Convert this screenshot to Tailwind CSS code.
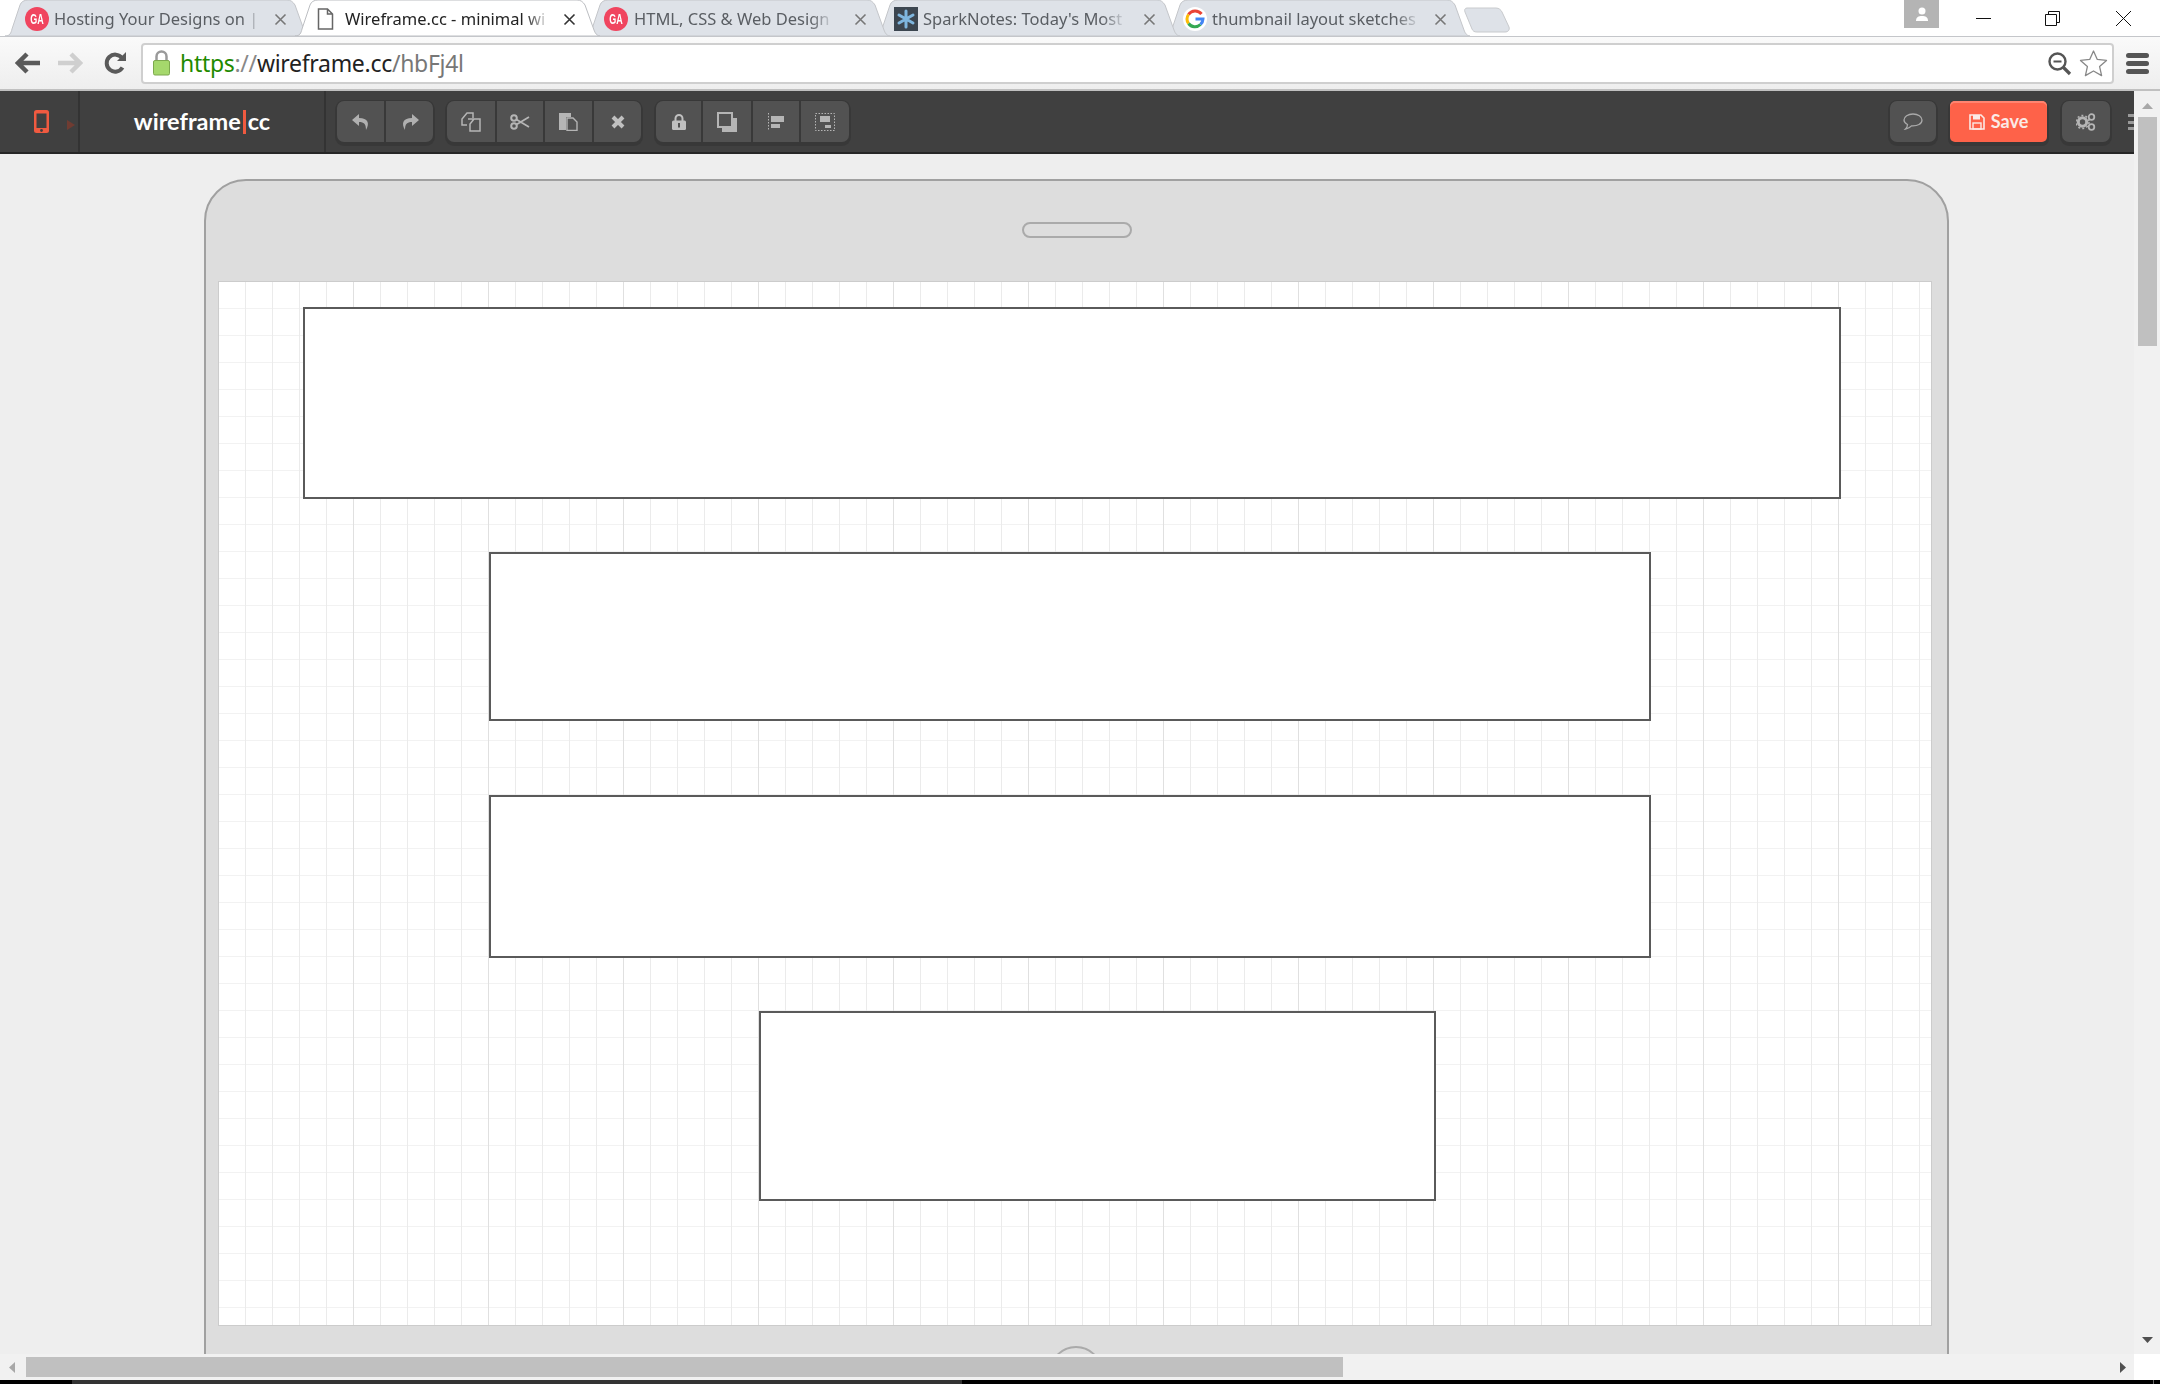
<!DOCTYPE html>
<html>
<head>
<meta charset="utf-8">
<script src="https://cdn.jsdelivr.net/npm/@tailwindcss/browser@4"></script>
<title>Wireframe.cc</title>
</head>
<body class="bg-white">
<div class="w-[2160px] h-[1384px] overflow-hidden flex flex-col bg-[#eee] font-['Open_Sans',sans-serif]">

  <!-- tab strip -->
  <div class="h-[36px] shrink-0 bg-white relative flex pl-[5px]">
    <!-- tab 1 -->
    <div class="relative w-[305px] h-[36px] shrink-0 z-[1]">
      <svg class="absolute inset-0" width="305" height="36" viewBox="0 0 305 36"><path d="M0 36C5 36 6 33 7 29L15 5C16 2 19 0 23 0H282C286 0 288 2 290 5L299 30C300 33 302 36 305 36Z" fill="#dee2e8" stroke="#c4c6ca"/></svg>
      <div class="absolute left-[20px] top-[7px] w-[24px] h-[24px] rounded-full bg-[#f0455f] border-2 border-dotted border-[#f0455f] flex items-center justify-center text-white text-[12px] font-bold font-['Liberation_Sans',sans-serif]"><span class="scale-x-[.75] scale-y-[1.2]">GA</span></div>
      <div class="absolute left-[49px] top-[6px] h-[26px] whitespace-nowrap text-[16.5px] leading-[26px] text-[#5a5e63] font-['Noto_Sans',sans-serif] [mask-image:linear-gradient(to_right,black_92%,#0003)]">Hosting Your Designs on |</div>
      <svg class="absolute left-[269px] top-[13px]" width="13" height="13" viewBox="0 0 13 13"><path d="M1.5 1.5L11.5 11.5M11.5 1.5L1.5 11.5" stroke="#777" stroke-width="1.6"/></svg>
    </div>
    <!-- tab 2 active -->
    <div class="relative w-[305px] h-[36px] shrink-0 -ml-[15px] z-[9]">
      <svg class="absolute inset-0" width="305" height="36" viewBox="0 0 305 36"><path d="M0 36C5 36 6 33 7 29L15 5C16 2 19 0 23 0H282C286 0 288 2 290 5L299 30C300 33 302 36 305 36Z" fill="#ffffff" stroke="#bcbec2"/></svg>
      <svg class="absolute left-[22px] top-[8px]" width="17" height="22" viewBox="0 0 17 22"><path d="M1.5 1H10.5L15.5 6V21H1.5Z M10.5 1V6H15.5" fill="#fff" stroke="#666" stroke-width="1.5"/></svg>
      <div class="absolute left-[50px] top-[6px] h-[26px] whitespace-nowrap text-[16.5px] leading-[26px] text-[#222] font-['Noto_Sans',sans-serif] [mask-image:linear-gradient(to_right,black_90%,#0003)]">Wireframe.cc - minimal wi</div>
      <svg class="absolute left-[268px] top-[13px]" width="13" height="13" viewBox="0 0 13 13"><path d="M1.5 1.5L11.5 11.5M11.5 1.5L1.5 11.5" stroke="#333" stroke-width="1.6"/></svg>
    </div>
    <!-- tab 3 -->
    <div class="relative w-[305px] h-[36px] shrink-0 -ml-[15px] z-[3]">
      <svg class="absolute inset-0" width="305" height="36" viewBox="0 0 305 36"><path d="M0 36C5 36 6 33 7 29L15 5C16 2 19 0 23 0H282C286 0 288 2 290 5L299 30C300 33 302 36 305 36Z" fill="#dee2e8" stroke="#c4c6ca"/></svg>
      <div class="absolute left-[19px] top-[7px] w-[24px] h-[24px] rounded-full bg-[#f0455f] border-2 border-dotted border-[#f0455f] flex items-center justify-center text-white text-[12px] font-bold font-['Liberation_Sans',sans-serif]"><span class="scale-x-[.75] scale-y-[1.2]">GA</span></div>
      <div class="absolute left-[49px] top-[6px] h-[26px] whitespace-nowrap text-[16.5px] leading-[26px] text-[#5a5e63] font-['Noto_Sans',sans-serif] [mask-image:linear-gradient(to_right,black_90%,#0003)]">HTML, CSS &amp; Web Design</div>
      <svg class="absolute left-[269px] top-[13px]" width="13" height="13" viewBox="0 0 13 13"><path d="M1.5 1.5L11.5 11.5M11.5 1.5L1.5 11.5" stroke="#777" stroke-width="1.6"/></svg>
    </div>
    <!-- tab 4 -->
    <div class="relative w-[305px] h-[36px] shrink-0 -ml-[15px] z-[2]">
      <svg class="absolute inset-0" width="305" height="36" viewBox="0 0 305 36"><path d="M0 36C5 36 6 33 7 29L15 5C16 2 19 0 23 0H282C286 0 288 2 290 5L299 30C300 33 302 36 305 36Z" fill="#dee2e8" stroke="#c4c6ca"/></svg>
      <svg class="absolute left-[19px] top-[7px]" width="24" height="24" viewBox="0 0 24 24"><rect width="24" height="24" fill="#3c4650"/><path d="M12 4V20M5 8L19 16M19 8L5 16" stroke="#7fb6de" stroke-width="3" stroke-linecap="round"/></svg>
      <div class="absolute left-[48px] top-[6px] h-[26px] whitespace-nowrap text-[16.5px] leading-[26px] text-[#5a5e63] font-['Noto_Sans',sans-serif] [mask-image:linear-gradient(to_right,black_90%,#0003)]">SparkNotes: Today's Most</div>
      <svg class="absolute left-[268px] top-[13px]" width="13" height="13" viewBox="0 0 13 13"><path d="M1.5 1.5L11.5 11.5M11.5 1.5L1.5 11.5" stroke="#777" stroke-width="1.6"/></svg>
    </div>
    <!-- tab 5 -->
    <div class="relative w-[305px] h-[36px] shrink-0 -ml-[15px] z-[1]">
      <svg class="absolute inset-0" width="305" height="36" viewBox="0 0 305 36"><path d="M0 36C5 36 6 33 7 29L15 5C16 2 19 0 23 0H282C286 0 288 2 290 5L299 30C300 33 302 36 305 36Z" fill="#dee2e8" stroke="#c4c6ca"/></svg>
      <svg class="absolute left-[18px] top-[7px]" width="24" height="24" viewBox="0 0 24 24"><circle cx="12" cy="12" r="12" fill="#fff"/><path d="M18.5 7A8 8 0 0 0 5.5 7.5" fill="none" stroke="#ea4335" stroke-width="3"/><path d="M5.5 7.5A8 8 0 0 0 5.5 16.5" fill="none" stroke="#fbbc05" stroke-width="3"/><path d="M5.5 16.5A8 8 0 0 0 17.5 17.5" fill="none" stroke="#34a853" stroke-width="3"/><path d="M17.5 17.5A8 8 0 0 0 20 12H12.5" fill="none" stroke="#4285f4" stroke-width="3"/></svg>
      <div class="absolute left-[47px] top-[6px] h-[26px] whitespace-nowrap text-[16.5px] leading-[26px] text-[#5a5e63] font-['Noto_Sans',sans-serif] [mask-image:linear-gradient(to_right,black_90%,#0003)]">thumbnail layout sketches</div>
      <svg class="absolute left-[269px] top-[13px]" width="13" height="13" viewBox="0 0 13 13"><path d="M1.5 1.5L11.5 11.5M11.5 1.5L1.5 11.5" stroke="#777" stroke-width="1.6"/></svg>
    </div>
    <!-- new tab -->
    <svg class="shrink-0 -ml-[7px] mt-[7px]" width="48" height="26" viewBox="0 0 48 26"><path d="M4 1H33C36 1 38 3 39 5L46 20C47 23 45 25 42 25H14C11 25 10 24 9 22L2 5C1 3 2 1 4 1Z" fill="#dee2e8" stroke="#c8cacd"/></svg>

    <!-- window controls -->
    <div class="absolute right-0 top-0 flex items-start h-[28px]">
      <div class="w-[35px] h-[28px] bg-[#b4b4b4] flex items-center justify-center mr-[37px]">
        <svg width="14" height="15" viewBox="0 0 14 15"><circle cx="7" cy="4" r="3.5" fill="#fff"/><path d="M1 14C1 10 3.5 9 7 9S13 10 13 14Z" fill="#fff"/></svg>
      </div>
      <svg class="mt-[11px] mr-[54px]" width="15" height="15" viewBox="0 0 15 15"><path d="M0 7.5H15" stroke="#111"/></svg>
      <svg class="mt-[11px] mr-[56px]" width="15" height="15" viewBox="0 0 15 15"><path d="M3.5 3V.5H14.5V11.5H11.5M.5 3.5H11.5V14.5H.5Z" fill="none" stroke="#111"/></svg>
      <svg class="mt-[11px] mr-[29px]" width="15" height="15" viewBox="0 0 15 15"><path d="M0 0L15 15M15 0L0 15" stroke="#111"/></svg>
    </div>
  </div>

  <!-- address bar -->
  <div class="h-[55px] shrink-0 bg-[linear-gradient(#fafafa,#eeeeee)] border-t border-[#c4c6ca] border-b-2 border-b-[#c0c0c0] flex items-center relative z-[5]">
    <svg class="ml-[15px]" width="26" height="22" viewBox="0 0 26 22"><path d="M12 2L3 11L12 20M3 11H25" fill="none" stroke="#5a5a5a" stroke-width="4.5"/></svg>
    <svg class="ml-[16px]" width="26" height="22" viewBox="0 0 26 22"><path d="M14 2L23 11L14 20M23 11H1" fill="none" stroke="#cfcfcf" stroke-width="4.5"/></svg>
    <svg class="ml-[21px]" width="23" height="23" viewBox="0 0 23 23"><path d="M18.5 15.5A8.5 8.5 0 1 1 18 6" fill="none" stroke="#5a5a5a" stroke-width="4"/><path d="M13 9H22V0Z" fill="#5a5a5a"/></svg>
    <div class="ml-[14px] w-[1973px] h-[41px] bg-white border-2 border-[#cfcfcf] rounded-[4px] flex items-center relative">
      <svg class="ml-[9px]" width="19" height="26" viewBox="0 0 19 26"><path d="M4.5 11V6.5A5 5 0 0 1 14.5 6.5V11" fill="none" stroke="#9a9a9a" stroke-width="2.5"/><rect x="1.5" y="10.5" width="16" height="14.5" rx="1.5" fill="#a5d86c" stroke="#7da84e"/></svg>
      <div class="ml-[9px] text-[23px] leading-[30px] whitespace-nowrap font-['Noto_Sans',sans-serif] tracking-[-0.3px]"><span class="text-[#1f8a00]">https</span><span class="text-[#888]">://</span><span class="text-[#222]">wireframe.cc</span><span class="text-[#777]">/hbFj4l</span></div>
      <svg class="absolute left-[1905px] top-[7px]" width="24" height="24" viewBox="0 0 24 24"><circle cx="9.5" cy="9.5" r="8" fill="none" stroke="#555" stroke-width="2.4"/><path d="M5.5 9.5H13.5" stroke="#555" stroke-width="2"/><path d="M15 15L22 22" stroke="#555" stroke-width="3.2"/></svg>
      <svg class="absolute left-[1936px] top-[4px]" width="29" height="29" viewBox="0 0 29 29"><path d="M14.5 2L18.3 10.4L27.5 11.4L20.6 17.6L22.6 26.6L14.5 22L6.4 26.6L8.4 17.6L1.5 11.4L10.7 10.4Z" fill="#fff" stroke="#888" stroke-width="1.3" stroke-linejoin="round"/></svg>
    </div>
    <svg class="ml-[12px]" width="23" height="21" viewBox="0 0 23 21"><rect y="0" width="23" height="5" rx="2.5" fill="#555"/><rect y="8" width="23" height="5" rx="2.5" fill="#555"/><rect y="16" width="23" height="5" rx="2.5" fill="#555"/></svg>
  </div>

  <!-- app area + vertical scrollbar -->
  <div class="flex-1 min-h-0 flex">
    <div class="w-[2134px] flex flex-col min-h-0">
      <!-- app toolbar -->
      <div class="h-[63px] shrink-0 bg-[#404040] border-b-2 border-b-[#262626] flex items-start relative overflow-hidden">
        <div class="w-[80px] h-[61px] border-r-2 border-[#333] relative">
          <svg class="absolute left-[34px] top-[19px]" width="15" height="23" viewBox="0 0 15 23"><rect width="15" height="23" rx="2.5" fill="#f05a40"/><rect x="2.5" y="3.5" width="10" height="14.5" fill="#404040"/><circle cx="7.5" cy="20.5" r="1.4" fill="#404040"/></svg>
          <svg class="absolute left-[67px] top-[29px]" width="8" height="10" viewBox="0 0 8 10"><path d="M0 0L8 5L0 10Z" fill="#703c32"/></svg>
        </div>
        <div class="w-[246px] h-[61px] border-r-2 border-[#333] flex items-center justify-center font-['Lato',sans-serif] font-bold text-[23.5px] text-white">
          <span>wireframe</span><span class="w-[3px] h-[24px] bg-[#f05a40] mx-[2px]"></span><span>cc</span>
        </div>
        <!-- group 1 -->
        <div class="ml-[11px] mt-[10px] flex h-[41px] rounded-[7px] bg-[#525252] shadow-[0_2px_0_2px_#383838,0_0_0_1px_#383838] overflow-hidden divide-x-2 divide-[#393939]">
          <div class="w-[49px] flex items-center justify-center"><svg width="20" height="18" viewBox="0 0 20 18"><path d="M8 1L1 7L8 13V9C13 9 15 11 15 17C19 10 17 5 8 5Z" fill="#b0b0b0"/></svg></div>
          <div class="w-[47px] flex items-center justify-center"><svg width="20" height="18" viewBox="0 0 20 18"><path d="M12 1L19 7L12 13V9C7 9 5 11 5 17C1 10 3 5 12 5Z" fill="#b0b0b0"/></svg></div>
        </div>
        <!-- group 2 -->
        <div class="ml-[14px] mt-[10px] flex h-[41px] rounded-[7px] bg-[#525252] shadow-[0_2px_0_2px_#383838,0_0_0_1px_#383838] overflow-hidden divide-x-2 divide-[#393939]">
          <div class="w-[50px] flex items-center justify-center"><svg width="20" height="20" viewBox="0 0 20 20"><path d="M6 13H1V7L6 1H12V6M7 7H19V19H9V12L13 7" fill="#525252" stroke="#b5b5b5" stroke-width="1.5"/></svg></div>
          <div class="w-[48px] flex items-center justify-center"><svg width="20" height="16" viewBox="0 0 20 16"><circle cx="4" cy="4" r="2.8" fill="none" stroke="#b5b5b5" stroke-width="2"/><circle cx="4" cy="12" r="2.8" fill="none" stroke="#b5b5b5" stroke-width="2"/><path d="M6.5 5.5L19 13M6.5 10.5L19 3" stroke="#b5b5b5" stroke-width="1.7"/></svg></div>
          <div class="w-[49px] flex items-center justify-center"><svg width="19" height="19" viewBox="0 0 19 19"><path d="M0 1H12V5H7V18H0Z" fill="#b5b5b5"/><path d="M8 6H14L18 10V18.500H8Z" fill="#525252" stroke="#b5b5b5" stroke-width="1.4"/></svg></div>
          <div class="w-[47px] flex items-center justify-center"><svg width="14" height="14" viewBox="0 0 14 14"><path d="M2 2L12 12M12 2L2 12" stroke="#c0c0c0" stroke-width="4"/></svg></div>
        </div>
        <!-- group 3 -->
        <div class="ml-[15px] mt-[10px] flex h-[41px] rounded-[7px] bg-[#525252] shadow-[0_2px_0_2px_#383838,0_0_0_1px_#383838] overflow-hidden divide-x-2 divide-[#393939]">
          <div class="w-[47px] flex items-center justify-center"><svg width="14" height="16" viewBox="0 0 14 16"><path d="M3.500 7V4.500A3.500 3.500 0 0 1 10.500 4.500V7" fill="none" stroke="#c0c0c0" stroke-width="2"/><rect y="6.500" width="14" height="9.500" rx="1.500" fill="#c0c0c0"/><rect x="6" y="9" width="2" height="4.500" fill="#525252"/></svg></div>
          <div class="w-[50px] flex items-center justify-center"><svg width="20" height="20" viewBox="0 0 20 20"><rect x="5" y="6" width="15" height="14" fill="#b5b5b5"/><rect x="1" y="1" width="14" height="14" fill="#525252" stroke="#b5b5b5" stroke-width="2"/></svg></div>
          <div class="w-[48px] flex items-center justify-center"><svg width="16" height="18" viewBox="0 0 16 18"><path d="M.5 0V18" stroke="#b5b5b5" stroke-dasharray="1.500 1.500"/><rect x="3" y="3" width="13" height="6" fill="#b5b5b5"/><rect x="3" y="11" width="9" height="4" fill="#b5b5b5"/></svg></div>
          <div class="w-[48px] flex items-center justify-center"><svg width="20" height="18" viewBox="0 0 20 18"><rect x=".5" y=".5" width="19" height="17" fill="none" stroke="#b5b5b5" stroke-dasharray="1.500 1.500"/><rect x="5" y="3" width="10" height="6" fill="#b5b5b5"/><rect x="10" y="12" width="6" height="3" fill="#b5b5b5"/></svg></div>
        </div>
        <!-- right side -->
        <div class="absolute right-0 top-[10px] flex">
          <div class="w-[46px] h-[41px] rounded-[7px] bg-[#525252] shadow-[0_2px_0_2px_#383838,0_0_0_1px_#383838] flex items-center justify-center mr-[14px]"><svg width="20" height="17" viewBox="0 0 20 17"><path d="M10 1C5 1 1 3.500 1 7C1 9 2.500 10.500 4.500 11.500C4.500 13 3.500 15 2.500 16C5 15.500 7.500 14 8.500 12.800C14.500 13.200 19 11 19 7C19 3.500 15 1 10 1Z" fill="none" stroke="#aaa" stroke-width="1.3"/></svg></div>
          <div class="w-[97px] h-[41px] rounded-[5px] bg-[#fe6249] shadow-[0_2px_0_2px_#383838,inset_0_2px_0_#ff8470] flex items-center justify-center gap-[6px] text-[#fbeae6] font-['Lato',sans-serif] font-bold text-[18px] mr-[15px]">
            <svg width="16" height="16" viewBox="0 0 16 16"><path d="M1 1H12L15 4V15H1Z" fill="none" stroke="#fbeae6" stroke-width="1.6"/><rect x="4" y="1" width="7" height="4.500" fill="#fbeae6"/><rect x="4" y="9" width="8" height="6" fill="none" stroke="#fbeae6" stroke-width="1.400"/></svg>
            <span>Save</span>
          </div>
          <div class="w-[48px] h-[41px] rounded-[7px] bg-[#525252] shadow-[0_2px_0_2px_#383838,0_0_0_1px_#383838] flex items-center justify-center mr-[18px]"><svg width="20" height="18" viewBox="0 0 20 18"><circle cx="6.500" cy="9" r="4.200" fill="none" stroke="#b5b5b5" stroke-width="3"/><circle cx="6.500" cy="9" r="6.500" fill="none" stroke="#b5b5b5" stroke-width="1.500" stroke-dasharray="2 2.100"/><circle cx="15.500" cy="4" r="2.800" fill="none" stroke="#b5b5b5" stroke-width="1.800"/><circle cx="15.500" cy="14" r="2.800" fill="none" stroke="#b5b5b5" stroke-width="1.800"/></svg></div>
          <div class="w-[6px] h-[16px] mt-[13px] flex flex-col justify-between"><div class="h-[3px] bg-[#9a9a9a]"></div><div class="h-[3px] bg-[#9a9a9a]"></div><div class="h-[3px] bg-[#9a9a9a]"></div></div>
        </div>
      </div>

      <!-- canvas -->
      <div class="flex-1 min-h-0 overflow-hidden bg-[#eee] pl-[204px] pt-[25px]">
        <div class="w-[1745px] h-[1300px] bg-[#ddd] border-2 border-[#a0a0a0] rounded-t-[42px] px-[12px] flex flex-col items-start">
          <div class="h-[100px] w-full shrink-0 flex items-start justify-center pt-[41px]">
            <div class="w-[110px] h-[16px] rounded-[8px] border-2 border-[#aaa]"></div>
          </div>
          <div class="w-[1714px] h-[1045px] shrink-0 relative border border-[#ccc] bg-white bg-[linear-gradient(to_right,transparent_134px,#e0e0e0_134px),linear-gradient(to_right,transparent_26px,#ebebeb_26px),linear-gradient(transparent_26px,#f2f2f2_26px)] bg-[size:135px_100%,27px_100%,100%_27px]">
            <div class="absolute left-[84px] top-[25px] w-[1538px] h-[192px] bg-white border-2 border-[#5a5a5a]"></div>
            <div class="absolute left-[270px] top-[270px] w-[1162px] h-[169px] bg-white border-2 border-[#5a5a5a]"></div>
            <div class="absolute left-[270px] top-[513px] w-[1162px] h-[163px] bg-white border-2 border-[#5a5a5a]"></div>
            <div class="absolute left-[540px] top-[729px] w-[677px] h-[190px] bg-white border-2 border-[#5a5a5a]"></div>
          </div>
          <div class="mt-[20px] ml-[831px] w-[54px] h-[54px] rounded-full border-2 border-[#aaa] shrink-0"></div>
        </div>
      </div>
    </div>

    <!-- vertical scrollbar -->
    <div class="w-[26px] bg-[#f1f1f1] relative">
      <svg class="absolute left-[8px] top-[12px]" width="11" height="6" viewBox="0 0 11 6"><path d="M0 6L5.500 0L11 6Z" fill="#a8a8a8"/></svg>
      <div class="absolute left-[4px] top-[26px] w-[19px] h-[229px] bg-[#c0c0c0]"></div>
      <svg class="absolute left-[8px] bottom-[11px]" width="11" height="6" viewBox="0 0 11 6"><path d="M0 0L5.500 6L11 0Z" fill="#505050"/></svg>
    </div>
  </div>

  <!-- horizontal scrollbar -->
  <div class="h-[26px] shrink-0 flex bg-[#f1f1f1]">
    <div class="w-[2134px] relative">
      <svg class="absolute left-[9px] top-[8px]" width="6" height="11" viewBox="0 0 6 11"><path d="M6 0L0 5.500L6 11Z" fill="#a8a8a8"/></svg>
      <div class="absolute left-[26px] top-[3px] w-[1317px] h-[20px] bg-[#c0c0c0]"></div>
      <svg class="absolute left-[2120px] top-[8px]" width="6" height="11" viewBox="0 0 6 11"><path d="M0 0L6 5.500L0 11Z" fill="#505050"/></svg>
    </div>
    <div class="w-[26px] bg-white"></div>
  </div>

  <!-- taskbar sliver -->
  <div class="h-[4px] shrink-0 bg-black flex relative">
    <div class="ml-[72px] w-[890px] bg-[#333]"></div>
    <div class="absolute left-[2153px] top-0 w-[1px] h-[4px] bg-[#666]"></div>
  </div>
</div>
</body>
</html>
